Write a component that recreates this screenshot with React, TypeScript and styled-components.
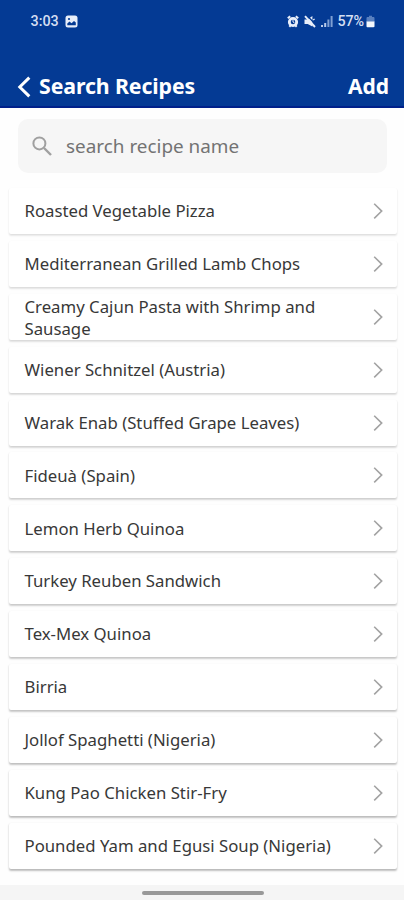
import React from "react";
import styled, { createGlobalStyle } from "styled-components";

const GlobalStyle = createGlobalStyle`
  * { box-sizing: border-box; }
  body { margin: 0; background: #fefefe; font-family: "Noto Sans", sans-serif; }
`;

const Screen = styled.div`
  width: 404px;
  height: 900px;
  display: flex;
  flex-direction: column;
  background: #fefefe;
  overflow: hidden;
`;

const Header = styled.header`
  height: 108px;
  flex: none;
  display: flex;
  flex-direction: column;
  background: #043a94;
  border-bottom: 2px solid #00208a;
  color: #fff;
`;

const StatusBar = styled.div`
  height: 42px;
  padding: 0 29px 0 30.5px;
  display: flex;
  align-items: center;
  justify-content: space-between;
  font: 500 14.3px/20px Roboto, sans-serif;
  color: #d5dff2;
`;

const StatusGroup = styled.div<{ $gap: number }>`
  display: flex;
  align-items: center;
  gap: ${(p) => p.$gap}px;
  svg { display: block; }
`;

const Battery = styled.span`
  display: flex;
  align-items: center;
  gap: 2px;
  letter-spacing: -0.1px;
`;

const NavBar = styled.div`
  height: 64px;
  padding: 23px 15px 0 17px;
  display: flex;
  align-items: flex-start;
  font-weight: 700;
  line-height: 42px;
`;

const BackIcon = styled.svg`
  width: 14px;
  height: 22px;
  margin: 11px 8px 0 0;
`;

const Title = styled.h1`
  margin: 0;
  flex: 1;
  font-size: 21.3px;
  line-height: 42px;
  letter-spacing: -0.1px;
`;

const AddButton = styled.button`
  padding: 0;
  border: 0;
  background: none;
  color: #fff;
  font: 700 21px/42px "Noto Sans", sans-serif;
`;

const SearchBox = styled.label`
  flex: none;
  height: 54px;
  margin: 11px 17px 15px 18px;
  padding: 0 14px;
  display: flex;
  align-items: center;
  gap: 14px;
  border-radius: 10px;
  background: #f6f6f6;
`;

const SearchInput = styled.input`
  flex: 1;
  min-width: 0;
  padding: 0;
  border: 0;
  outline: 0;
  background: none;
  font: 18.9px/28px "Noto Sans", sans-serif;
  &::placeholder { color: #737373; opacity: 1; }
`;

const List = styled.ul`
  margin: 0;
  padding: 0 7px 0 9px;
  list-style: none;
  display: flex;
  flex-direction: column;
  gap: 6.9px;
`;

const Row = styled.li<{ $shade: number }>`
  height: 46px;
  padding: 0 13px 0 15.5px;
  display: flex;
  align-items: center;
  justify-content: space-between;
  border-radius: 2px;
  background: #fff;
  box-shadow: 0 1.5px 2px rgba(0, 0, 0, ${(p) => p.$shade}), 0 1px 2px rgba(0, 0, 0, 0.06);
`;

const Name = styled.span<{ $wraps: boolean }>`
  max-width: 320px;
  padding-top: ${(p) => (p.$wraps ? 3 : 1)}px;
  font-size: 16.75px;
  line-height: 22.5px;
  color: #383838;
`;

const Footer = styled.footer`
  height: 15px;
  flex: none;
  margin-top: auto;
  padding: 6px 0 0 1px;
  display: flex;
  justify-content: center;
  background: #f5f5f5;
`;

const HomeHandle = styled.div`
  width: 122px;
  height: 4px;
  border-radius: 2px;
  background: #999;
`;

const recipes = [
  "Roasted Vegetable Pizza",
  "Mediterranean Grilled Lamb Chops",
  "Creamy Cajun Pasta with Shrimp and Sausage",
  "Wiener Schnitzel (Austria)",
  "Warak Enab (Stuffed Grape Leaves)",
  "Fideuà (Spain)",
  "Lemon Herb Quinoa",
  "Turkey Reuben Sandwich",
  "Tex-Mex Quinoa",
  "Birria",
  "Jollof Spaghetti (Nigeria)",
  "Kung Pao Chicken Stir-Fry",
  "Pounded Yam and Egusi Soup (Nigeria)",
];

const PictureIcon = () => (
  <svg width="13" height="13" viewBox="0 0 13 13">
    <rect x="0.5" y="0.5" width="12" height="12" rx="2.5" fill="#e8eefa" />
    <path d="M2.3 10.3V8.6l2.2-2 2 1.7L9 5.9l1.8 1.7v2.7z" fill="#043a94" />
    <circle cx="4" cy="4" r="1.1" fill="#043a94" />
  </svg>
);

const AlarmIcon = () => (
  <svg width="12" height="13" viewBox="0 0 12 13" fill="none" stroke="#e8eefa">
    <circle cx="6" cy="7" r="3.7" strokeWidth="2.8" />
    <path d="M.8 3.2 3.2 1.2M11.2 3.2 8.8 1.2M2.3 11.8l1.2-1.3M9.7 11.8l-1.2-1.3" strokeWidth="2" />
    <path d="M6 4.7V7l1.5.9" />
  </svg>
);

const MutedIcon = () => (
  <svg width="12" height="13" viewBox="0 0 12 13">
    <path d="M.5 4.6h3L8.4 1v10.5L3.7 9H.5z" fill="#e8eefa" />
    <path d="M3 .6 12 10" stroke="#043a94" strokeWidth="1.4" />
    <path d="M1 1.2 11 12" stroke="#e8eefa" strokeWidth="1.9" />
    <path d="m9.1 5 1.5-1" stroke="#e8eefa" strokeWidth="1.2" />
  </svg>
);

const SignalIcon = () => (
  <svg width="12" height="13" viewBox="0 0 12 13">
    <path d="M0 10h2v2H0zM3.2 8h2v4h-2z" fill="#b9cbea" />
    <path d="M6.4 4.5h2V12h-2zM9.6 1h2v11h-2z" fill="#7f9fd2" />
  </svg>
);

const BatteryIcon = () => (
  <svg width="9" height="13" viewBox="0 0 9 13">
    <path d="M3 .8h3v1.1h1.2c.9 0 1.3.5 1.3 1.3V7h-8V3.2c0-.8.4-1.3 1.3-1.3H3z" fill="#587fbf" />
    <path d="M.5 6.5h8v4.8c0 .5-.4.9-.9.9H1.4c-.5 0-.9-.4-.9-.9z" fill="#f4f7fd" />
  </svg>
);

const SearchIcon = () => (
  <svg width="20" height="20" viewBox="0 0 20 20" fill="none" stroke="#a0a0a0" strokeWidth="2">
    <circle cx="7.4" cy="7.4" r="6" />
    <path d="m12 12 7 7" strokeWidth="2.4" />
  </svg>
);

const Chevron = () => (
  <svg width="12" height="18" viewBox="0 0 12 18" fill="none" stroke="#a3a3a3" strokeWidth="1.6">
    <path d="m2.2 1.8 7.5 7.3-7.5 7.3" />
  </svg>
);

export default function App() {
  return (
    <Screen>
      <GlobalStyle />
      <Header>
        <StatusBar>
          <StatusGroup $gap={6}>
            <span>3:03</span>
            <PictureIcon />
          </StatusGroup>
          <StatusGroup $gap={5}>
            <AlarmIcon />
            <MutedIcon />
            <SignalIcon />
            <Battery>
              <span>57%</span>
              <BatteryIcon />
            </Battery>
          </StatusGroup>
        </StatusBar>
        <NavBar>
          <BackIcon viewBox="0 0 14 22" fill="none" stroke="#fff" strokeWidth="3">
            <path d="M12.3 1.6 2.8 11l9.5 9.4" />
          </BackIcon>
          <Title>Search Recipes</Title>
          <AddButton>Add</AddButton>
        </NavBar>
      </Header>
      <SearchBox>
        <SearchIcon />
        <SearchInput placeholder="search recipe name" />
      </SearchBox>
      <List>
        {recipes.map((name, i) => (
          <Row key={name} $shade={0.08 + i * 0.013}>
            <Name $wraps={name.length > 38}>{name}</Name>
            <Chevron />
          </Row>
        ))}
      </List>
      <Footer>
        <HomeHandle />
      </Footer>
    </Screen>
  );
}
